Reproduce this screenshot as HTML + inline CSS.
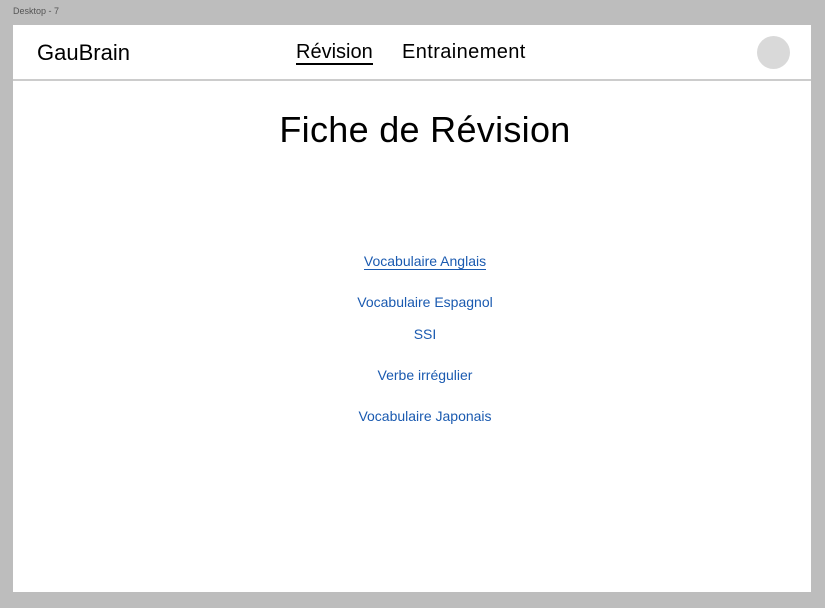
<!DOCTYPE html>
<html><head><meta charset="utf-8"><style>
body{margin:0;width:825px;height:608px;background:#bdbdbd;position:relative;font-family:"Liberation Sans",sans-serif;overflow:hidden}
.lbl{position:absolute;left:13px;top:6px;font-size:9px;color:#555}
.f{position:absolute;left:13px;top:25px;width:798px;height:567px;background:#fff}
.hd{position:absolute;left:0;top:0;width:798px;height:54px;border-bottom:2px solid #ccc}
.t{position:absolute;white-space:nowrap;color:#000}
.av{position:absolute;left:744px;top:11px;width:33px;height:33px;border-radius:50%;background:#d9d9d9}
.a{position:absolute;left:13px;width:798px;text-align:center;font-size:14px;color:#1a5ab0}
</style></head><body>
<div class="lbl">Desktop - 7</div>
<div class="f">
<div class="hd">
<div class="t" style="left:24px;top:15px;font-size:22px">GauBrain</div>
<div class="t" style="left:283px;top:16px;font-size:20px;border-bottom:2px solid #000;line-height:22px">Révision</div>
<div class="t" style="left:389px;top:16px;font-size:20px;line-height:22px;letter-spacing:0.4px">Entrainement</div>
<div class="av"></div>
</div>
<div class="t" style="left:13px;width:798px;text-align:center;top:84px;font-size:36px;letter-spacing:0.3px">Fiche de Révision</div>
<div class="a" style="top:228px"><span style="border-bottom:1px solid #1a5ab0">Vocabulaire Anglais</span></div>
<div class="a" style="top:269px">Vocabulaire Espagnol</div>
<div class="a" style="top:301px">SSI</div>
<div class="a" style="top:342px">Verbe irrégulier</div>
<div class="a" style="top:383px">Vocabulaire Japonais</div>
</div>
</body></html>
